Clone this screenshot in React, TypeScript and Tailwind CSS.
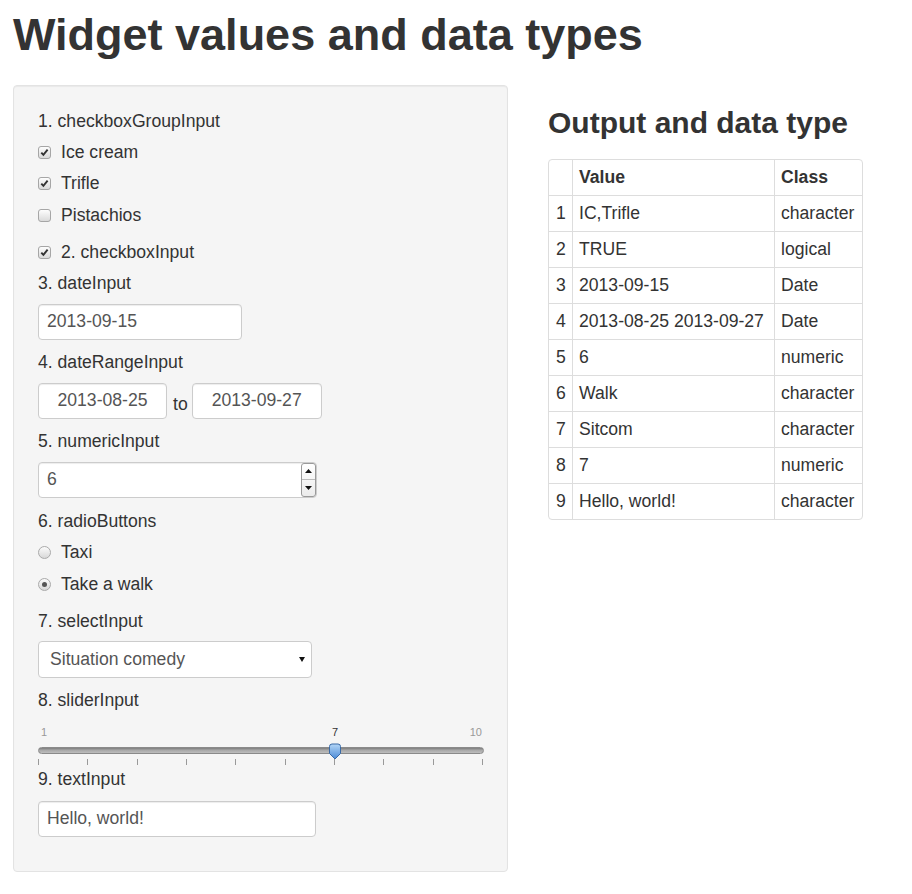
import { Fragment } from "react";

const rows = [
  ["1", "IC,Trifle", "character"],
  ["2", "TRUE", "logical"],
  ["3", "2013-09-15", "Date"],
  ["4", "2013-08-25 2013-09-27", "Date"],
  ["5", "6", "numeric"],
  ["6", "Walk", "character"],
  ["7", "Sitcom", "character"],
  ["8", "7", "numeric"],
  ["9", "Hello, world!", "character"],
];

function Label({ text, className = "" }: { text: string; className?: string }) {
  return <div className={"h-[26px] flex items-center " + className}>{text}</div>;
}

function Checkbox({ checked }: { checked: boolean }) {
  return (
    <span className="w-[13px] h-[13px] shrink-0 rounded-[3px] border border-[#a6a6a6] bg-[linear-gradient(to_bottom,#fdfdfd,#dadada)] flex items-center justify-center">
      {checked && (
        <svg width="9" height="9" viewBox="0 0 9 9">
          <path d="M1.3 4.6 L3.4 6.9 L7.6 1.7" stroke="#333" strokeWidth="1.9" fill="none" />
        </svg>
      )}
    </span>
  );
}

function CheckRow({ label, checked, className = "" }: { label: string; checked: boolean; className?: string }) {
  return (
    <div className={"h-[30px] flex items-center gap-[10px] " + className}>
      <Checkbox checked={checked} />
      <span>{label}</span>
    </div>
  );
}

function RadioRow({ label, on, className = "" }: { label: string; on: boolean; className?: string }) {
  return (
    <div className={"h-[30px] flex items-center gap-[10px] " + className}>
      <span className="w-[13px] h-[13px] shrink-0 rounded-full border border-[#aaa] bg-[linear-gradient(to_bottom,#fbfbfb,#d8d8d8)] flex items-center justify-center">
        {on && <span className="w-[5px] h-[5px] rounded-full bg-[#555]" />}
      </span>
      <span>{label}</span>
    </div>
  );
}

const boxCls =
  "h-[36px] rounded-[4px] border border-[#ccc] bg-white text-[#555] flex items-center shadow-[inset_0_1px_1px_rgba(0,0,0,0.075)]";

function Slider() {
  const ticks = Array.from({ length: 10 }, (_, i) => i);
  return (
    <div className="relative h-[48px] mt-[5px]">
      <span className="absolute left-[3px] top-[6px] text-[11px] leading-[14px] text-[#999]">1</span>
      <span className="absolute left-[297px] top-[6px] -translate-x-1/2 text-[11px] leading-[14px] text-[#333]">7</span>
      <span className="absolute right-[1px] top-[6px] text-[11px] leading-[14px] text-[#999]">10</span>
      <div className="absolute left-0 right-[-1px] top-[28px] h-[7px] rounded-full border border-[#8a8a8a] bg-[linear-gradient(to_bottom,#7c7c7c,#a9a9a9_45%,#bdbdbd)]" />
      <div className="absolute left-0 right-0 top-[40px] h-[6px] flex justify-between">
        {ticks.map((t) => (
          <span key={t} className="w-px h-full bg-[#999]" />
        ))}
      </div>
      <svg className="absolute left-[290px] top-[24px]" width="14" height="17" viewBox="0 0 14 17">
        <defs>
          <linearGradient id="hg" x1="0" y1="0" x2="0" y2="1">
            <stop offset="0" stopColor="#b3d6f7" />
            <stop offset="1" stopColor="#4b8ad6" />
          </linearGradient>
        </defs>
        <path d="M1.5 3.5 Q1.5 1 4 1 H10 Q12.5 1 12.5 3.5 V10.5 L7 16 L1.5 10.5 Z" fill="url(#hg)" stroke="#3a6aa6" strokeWidth="1" />
      </svg>
    </div>
  );
}

function App() {
  return (
    <div className="min-h-screen bg-white text-[#333] font-['Liberation_Sans',Arial,sans-serif] text-[17.6px] pl-[13px]">
      <h1 className="mt-[10px] mb-[25px] text-[45px] leading-[49.5px] font-bold">Widget values and data types</h1>

      <div className="flex items-start gap-[40px]">
        {/* Inputs panel */}
        <div className="w-[495px] rounded-[4px] border border-[#e3e3e3] bg-[#f5f5f5] px-[24px] pt-[23px] pb-[34px] shadow-[inset_0_1px_1px_rgba(0,0,0,0.05)]">
          <Label text="1. checkboxGroupInput" />
          <CheckRow label="Ice cream" checked className="mt-[3px]" />
          <CheckRow label="Trifle" checked className="mt-[1px]" />
          <CheckRow label="Pistachios" checked={false} className="mt-[2px]" />
          <CheckRow label="2. checkboxInput" checked className="mt-[7px]" />

          <Label text="3. dateInput" className="mt-[3px]" />
          <div className={boxCls + " w-[204px] px-[8px] mt-[7px]"}>2013-09-15</div>

          <Label text="4. dateRangeInput" className="mt-[10px]" />
          <div className="flex items-center mt-[7px]">
            <div className={boxCls + " w-[129px] justify-center"}>2013-08-25</div>
            <span className="ml-[6px] mr-[4px] pt-[7px]">to</span>
            <div className={boxCls + " w-[130px] justify-center"}>2013-09-27</div>
          </div>

          <Label text="5. numericInput" className="mt-[10px]" />
          <div className={boxCls + " w-[279px] pl-[8px] mt-[7px]"}>
            <span>6</span>
            <div className="ml-auto self-stretch w-[15px] rounded-[3px] border border-[#9a9a9a] bg-[linear-gradient(to_bottom,#ffffff,#ececec)] flex flex-col">
              <div className="flex-1 flex items-center justify-center border-b border-[#bbb]">
                <svg width="7" height="4" viewBox="0 0 7 4">
                  <path d="M0 4 L3.5 0 L7 4 Z" fill="#111" />
                </svg>
              </div>
              <div className="flex-1 flex items-center justify-center">
                <svg width="7" height="4" viewBox="0 0 7 4">
                  <path d="M0 0 L3.5 4 L7 0 Z" fill="#111" />
                </svg>
              </div>
            </div>
          </div>

          <Label text="6. radioButtons" className="mt-[11px]" />
          <RadioRow label="Taxi" on={false} className="mt-[3px]" />
          <RadioRow label="Take a walk" on className="mt-[2px]" />

          <Label text="7. selectInput" className="mt-[9px]" />
          <div className={boxCls + " h-[37px] w-[274px] pl-[11px] pr-[6px] justify-between mt-[6px] shadow-none"}>
            <span>Situation comedy</span>
            <svg width="6" height="5" viewBox="0 0 6 5">
              <path d="M0 0 L6 0 L3 5 Z" fill="#111" />
            </svg>
          </div>

          <Label text="8. sliderInput" className="mt-[10px]" />
          <Slider />

          <Label text="9. textInput" />
          <div className={boxCls + " w-[278px] px-[8px] mt-[8px]"}>Hello, world!</div>
        </div>

        {/* Output table */}
        <div>
          <h3 className="mt-[22px] mb-[20px] text-[30px] leading-[32px] font-bold">Output and data type</h3>
          <div className="w-[315px] rounded-[4px] border border-[#ddd] overflow-hidden">
            <div className="grid grid-cols-[23px_202px_88px]">
              <div className="h-[35px]" />
              <div className="h-[35px] flex items-center pl-[6px] border-l border-[#ddd] font-bold">Value</div>
              <div className="h-[35px] flex items-center pl-[6px] border-l border-[#ddd] font-bold">Class</div>
              {rows.map((r) => (
                <Fragment key={r[0]}>
                  <div className="h-[36px] flex items-center pl-[7px] border-t border-[#ddd]">{r[0]}</div>
                  <div className="h-[36px] flex items-center pl-[6px] border-t border-l border-[#ddd] whitespace-nowrap">{r[1]}</div>
                  <div className="h-[36px] flex items-center pl-[6px] border-t border-l border-[#ddd]">{r[2]}</div>
                </Fragment>
              ))}
            </div>
          </div>
        </div>
      </div>
    </div>
  );
}

export default App;
